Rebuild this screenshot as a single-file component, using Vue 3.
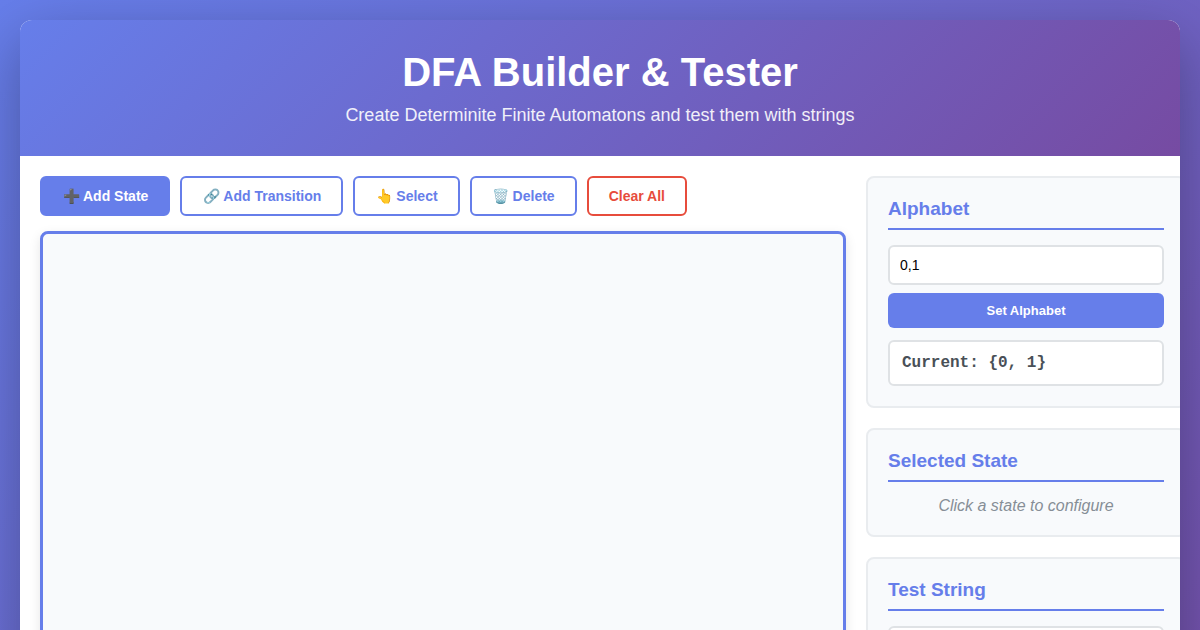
<script setup>
import { ref, computed } from 'vue'

const tools = [
  { id: 'state', icon: '➕', label: 'Add State' },
  { id: 'transition', icon: '🔗', label: 'Add Transition' },
  { id: 'select', icon: '👆', label: 'Select' },
  { id: 'delete', icon: '🗑️', label: 'Delete' },
]
const activeTool = ref('state')
const alphabetInput = ref('0,1')
const alphabet = ref(['0', '1'])
const testString = ref('')
const alphabetText = computed(() => `Current: {${alphabet.value.join(', ')}}`)

function setAlphabet() {
  alphabet.value = alphabetInput.value.split(',').map((s) => s.trim()).filter(Boolean)
}
</script>

<template>
  <div class="page">
    <div class="container">
      <header class="header">
        <h1>DFA Builder &amp; Tester</h1>
        <p>Create Determinite Finite Automatons and test them with strings</p>
      </header>
      <main class="content">
        <section class="workspace">
          <div class="toolbar">
            <button
              v-for="tool in tools"
              :key="tool.id"
              type="button"
              class="tool"
              :class="{ active: activeTool === tool.id }"
              @click="activeTool = tool.id"
            >
              <span class="icon">{{ tool.icon }}</span>
              <span>{{ tool.label }}</span>
            </button>
            <button type="button" class="tool danger">Clear All</button>
          </div>
          <canvas class="board" width="800" height="600"></canvas>
        </section>
        <aside class="sidebar">
          <section class="panel">
            <h2 id="alphabet-title">Alphabet</h2>
            <input v-model="alphabetInput" class="field" type="text" aria-labelledby="alphabet-title" />
            <button type="button" class="primary" @click="setAlphabet">Set Alphabet</button>
            <div class="current">{{ alphabetText }}</div>
          </section>
          <section class="panel">
            <h2>Selected State</h2>
            <p class="hint">Click a state to configure</p>
          </section>
          <section class="panel">
            <h2 id="test-title">Test String</h2>
            <input v-model="testString" class="field" type="text" aria-labelledby="test-title" />
          </section>
        </aside>
      </main>
    </div>
  </div>
</template>

<style>
body {
  margin: 0;
  background: linear-gradient(135deg, #667eea 0%, #764ba2 100%);
}
</style>

<style scoped>
.page,
.page *:not(canvas) {
  box-sizing: border-box;
}
.page {
  min-height: 1000px;
  padding: 20px;
  font-family: "Liberation Sans", Arial, sans-serif;
  font-size: 16px;
}
h1,
h2,
p {
  margin: 0;
}
.container {
  max-width: 1400px;
  margin: 0 auto;
  overflow: hidden;
  background: #fff;
  border-radius: 12px;
  box-shadow: 0 20px 60px rgba(0, 0, 0, 0.3);
}
.header {
  padding: 30px;
  text-align: center;
  color: #fff;
  background: linear-gradient(135deg, #667eea 0%, #764ba2 100%);
}
.header h1 {
  margin-bottom: 10px;
  font-size: 40px;
  line-height: 44px;
}
.header p {
  font-size: 18px;
  line-height: 22px;
  opacity: 0.9;
}
.content {
  display: grid;
  grid-template-columns: 1fr 320px;
  gap: 20px;
  padding: 20px;
}
.toolbar {
  display: flex;
  flex-wrap: wrap;
  gap: 10px;
  margin-bottom: 15px;
}
.tool {
  display: inline-flex;
  align-items: center;
  gap: 3px;
  padding: 10px 20px;
  border: 2px solid #667eea;
  border-radius: 6px;
  background: #fff;
  color: #667eea;
  font-family: inherit;
  font-size: 14px;
  font-weight: 600;
  line-height: 16px;
  cursor: pointer;
}
.icon {
  width: 18px;
  height: 16px;
}
.tool.active {
  background: #667eea;
  color: #fff;
}
.tool.danger {
  border-color: #e74c3c;
  color: #e74c3c;
}
.board {
  display: block;
  border: 3px solid #667eea;
  border-radius: 8px;
  background: #f8fafc;
  box-shadow: 0 4px 12px rgba(0, 0, 0, 0.1);
  cursor: crosshair;
}
.sidebar {
  display: flex;
  flex-direction: column;
  gap: 20px;
}
.panel {
  padding: 20px;
  border: 2px solid #e9ecef;
  border-radius: 8px;
  background: #f8fafc;
}
.panel h2 {
  margin-bottom: 15px;
  padding-bottom: 8px;
  border-bottom: 2px solid #667eea;
  color: #667eea;
  font-size: 19px;
  line-height: 22px;
}
.field {
  display: block;
  width: 100%;
  padding: 10px;
  border: 2px solid #dfe2e5;
  border-radius: 6px;
  background: #fff;
  color: #000;
  font-family: inherit;
  font-size: 14px;
  line-height: 16px;
}
.primary {
  display: block;
  width: 100%;
  margin-top: 8px;
  padding: 10px;
  border: 0;
  border-radius: 6px;
  background: #667eea;
  color: #fff;
  font-family: inherit;
  font-size: 13px;
  font-weight: 600;
  line-height: 15px;
  cursor: pointer;
}
.current {
  margin-top: 12px;
  padding: 12px;
  border: 2px solid #dfe2e5;
  border-radius: 6px;
  background: #fff;
  color: #495057;
  font-family: "Liberation Mono", "Courier New", monospace;
  font-weight: 700;
  line-height: 18px;
}
.hint {
  color: #868e96;
  font-style: italic;
  line-height: 18px;
  text-align: center;
}
</style>
